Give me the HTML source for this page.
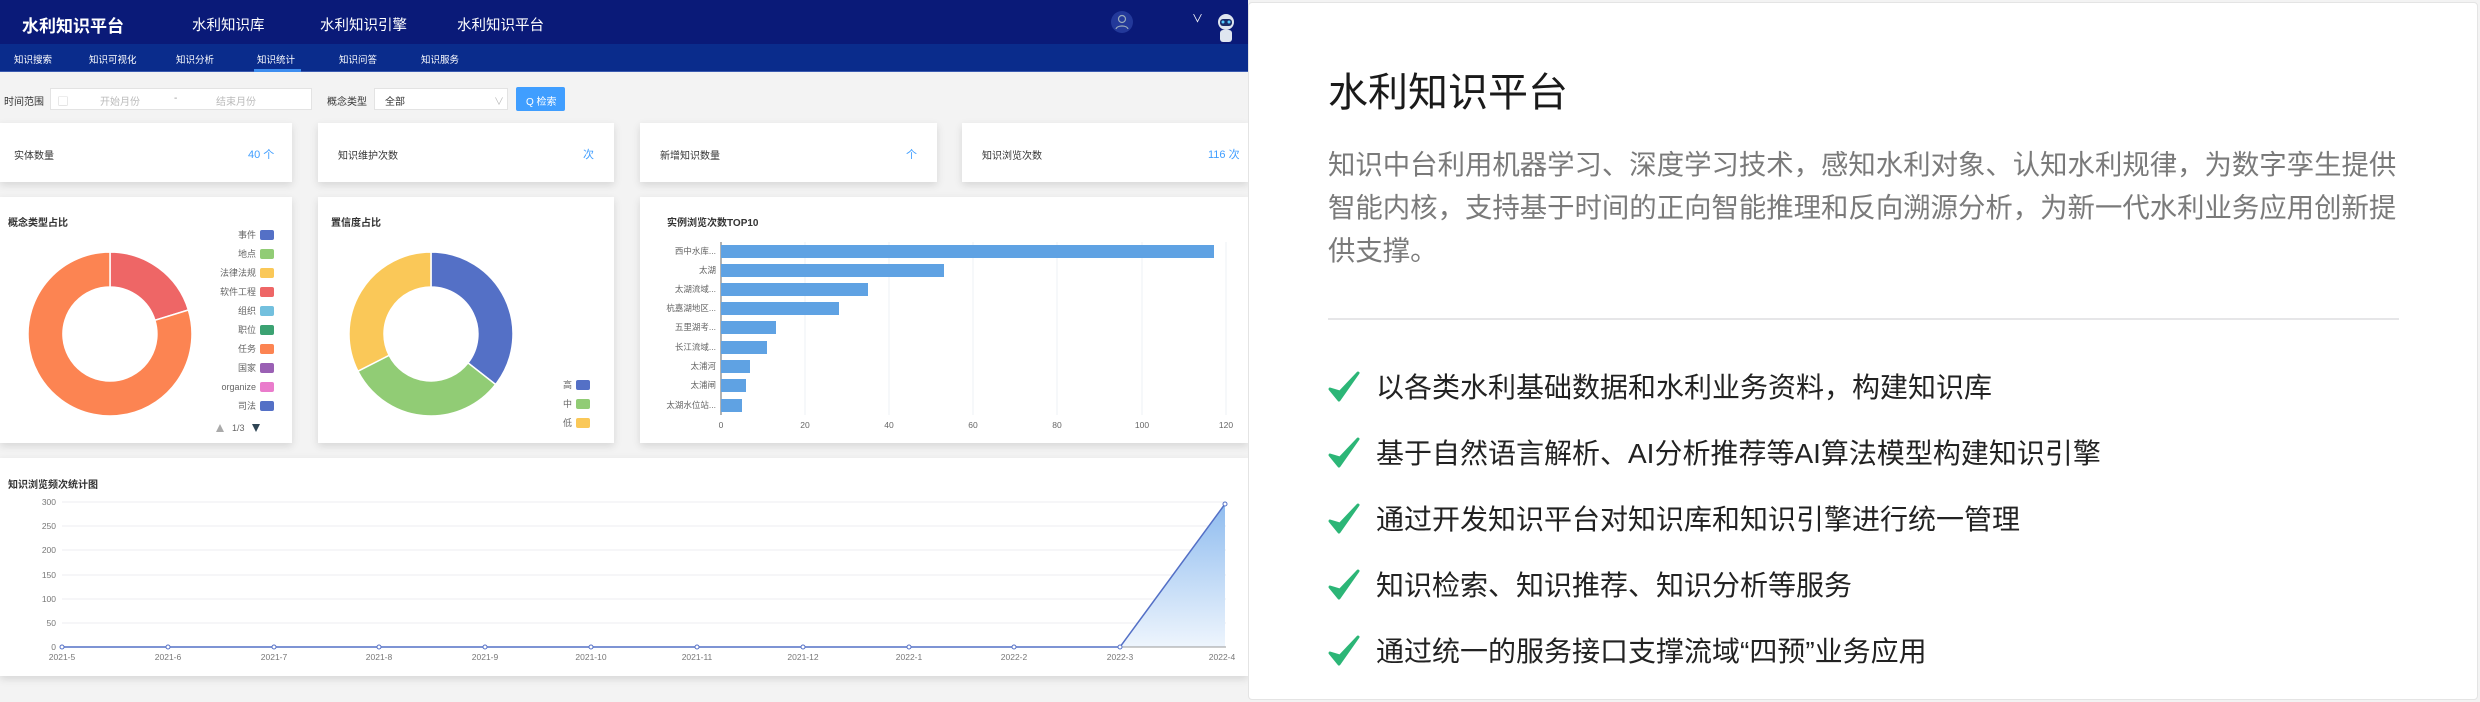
<!DOCTYPE html>
<html><head><meta charset="utf-8"><style>
*{margin:0;padding:0;box-sizing:border-box}
body{width:2480px;height:702px;overflow:hidden;background:#f3f3f3;font-family:"Liberation Sans","Noto Sans CJK SC",sans-serif;position:relative}
.a{position:absolute}
.nav{left:0;top:0;width:1248px;height:44px;background:#0a1a78}
.sub{left:0;top:44px;width:1248px;height:28px;background:#0a2c8c;border-bottom:1px solid #3a5ab0}
.w{color:#fff;white-space:nowrap}
.card{background:#fff;box-shadow:0 3px 8px rgba(0,0,0,.12)}
.s{font-size:10px;color:#333;white-space:nowrap}
.right{left:1248px;top:2px;width:1230px;height:698px;background:#fff;border:1px solid #e4e4e4;border-radius:4px}
.chk{position:absolute;left:1328px;width:520px}
.chk span{position:absolute;left:48px;top:0;font-size:28px;color:#222;white-space:nowrap;line-height:34px}
</style></head><body>
<div class="a nav"></div>
<div class="a w" style="left:22px;top:12px;font-size:17px;font-weight:bold">水利知识平台</div>
<div class="a w" style="left:192px;top:14px;font-size:14.5px">水利知识库</div>
<div class="a w" style="left:320px;top:14px;font-size:14.5px">水利知识引擎</div>
<div class="a w" style="left:457px;top:14px;font-size:14.5px">水利知识平台</div>
<svg class="a" style="left:1110px;top:10px" width="24" height="24"><circle cx="12" cy="12" r="11" fill="#23399a"/><circle cx="12" cy="9" r="3.5" fill="none" stroke="#9ab" stroke-width="1.2"/><path d="M6 19c1-4 11-4 12 0" fill="none" stroke="#9ab" stroke-width="1.2"/></svg>
<div class="a w" style="left:1192px;top:10px;font-size:11px">∨</div>
<svg class="a" style="left:1212px;top:12px" width="28" height="32"><circle cx="14" cy="10" r="8" fill="#dfe6f0"/><rect x="8" y="7" width="12" height="7" rx="3" fill="#1a2d6a"/><circle cx="11" cy="10" r="1.5" fill="#5cf"/><circle cx="17" cy="10" r="1.5" fill="#5cf"/><rect x="8" y="18" width="12" height="12" rx="3" fill="#dfe6f0"/></svg>
<div class="a sub"></div>
<div class="a w" style="left:14px;top:52px;font-size:9.5px">知识搜索</div>
<div class="a w" style="left:89px;top:52px;font-size:9.5px">知识可视化</div>
<div class="a w" style="left:176px;top:52px;font-size:9.5px">知识分析</div>
<div class="a w" style="left:257px;top:52px;font-size:9.5px">知识统计</div>
<div class="a" style="left:254px;top:69px;width:47px;height:3px;background:#3d8ef0"></div>
<div class="a w" style="left:339px;top:52px;font-size:9.5px">知识问答</div>
<div class="a w" style="left:421px;top:52px;font-size:9.5px">知识服务</div>

<div class="a s" style="left:4px;top:93px">时间范围</div>
<div class="a" style="left:50px;top:88px;width:262px;height:22px;background:#fff;border:1px solid #e3e3e3"></div>
<div class="a s" style="left:58px;top:93px;color:#bbb">▢</div>
<div class="a s" style="left:100px;top:93px;color:#bbb">开始月份</div>
<div class="a s" style="left:174px;top:93px;color:#999">-</div>
<div class="a s" style="left:216px;top:93px;color:#bbb">结束月份</div>
<div class="a s" style="left:327px;top:93px">概念类型</div>
<div class="a" style="left:374px;top:88px;width:134px;height:22px;background:#fff;border:1px solid #e3e3e3"></div>
<div class="a s" style="left:385px;top:93px">全部</div>
<div class="a s" style="left:494px;top:93px;color:#bbb">∨</div>
<div class="a" style="left:516px;top:87px;width:49px;height:24px;background:#409eff;border-radius:2px"></div>
<div class="a s" style="left:526px;top:93px;color:#fff">Q 检索</div>

<div class="a card" style="left:0;top:123px;width:292px;height:59px"></div>
<div class="a card" style="left:318px;top:123px;width:296px;height:59px"></div>
<div class="a card" style="left:640px;top:123px;width:297px;height:59px"></div>
<div class="a card" style="left:962px;top:123px;width:286px;height:59px"></div>
<div class="a s" style="left:14px;top:147px">实体数量</div>
<div class="a s" style="left:248px;top:146px;color:#409eff;font-size:11px">40 个</div>
<div class="a s" style="left:338px;top:147px">知识维护次数</div>
<div class="a s" style="left:583px;top:146px;color:#409eff;font-size:11px">次</div>
<div class="a s" style="left:660px;top:147px">新增知识数量</div>
<div class="a s" style="left:906px;top:146px;color:#409eff;font-size:11px">个</div>
<div class="a s" style="left:982px;top:147px">知识浏览次数</div>
<div class="a s" style="left:1208px;top:146px;color:#409eff;font-size:11px">116 次</div>

<div class="a card" style="left:0;top:197px;width:292px;height:246px"></div>
<div class="a card" style="left:318px;top:197px;width:296px;height:246px"></div>
<div class="a card" style="left:640px;top:197px;width:608px;height:246px"></div>
<div class="a s" style="left:8px;top:214px;font-weight:bold">概念类型占比</div>
<div class="a s" style="left:331px;top:214px;font-weight:bold">置信度占比</div>
<div class="a s" style="left:667px;top:214px;font-weight:bold">实例浏览次数TOP10</div>

<svg class="a" style="left:0;top:197px" width="1248" height="246" font-family="Liberation Sans,Noto Sans CJK SC,sans-serif" font-size="9" fill="#666">
<g transform="translate(110,137)" stroke="#fff" stroke-width="1.5">
<path d="M0,-82 A82,82 0 0 1 78.4,-24 L44.9,-13.7 A47,47 0 0 0 0,-47Z" fill="#ee6666"/>
<path d="M78.4,-24 A82,82 0 1 1 0,-82 L0,-47 A47,47 0 1 0 44.9,-13.7Z" fill="#fc8452"/>
</g>
<g text-anchor="end">
<text x="256" y="41">事件</text><rect x="260" y="33" width="14" height="10" rx="2" fill="#5470c6"/>
<text x="256" y="60">地点</text><rect x="260" y="52" width="14" height="10" rx="2" fill="#91cc75"/>
<text x="256" y="79">法律法规</text><rect x="260" y="71" width="14" height="10" rx="2" fill="#fac858"/>
<text x="256" y="98">软件工程</text><rect x="260" y="90" width="14" height="10" rx="2" fill="#ee6666"/>
<text x="256" y="117">组织</text><rect x="260" y="109" width="14" height="10" rx="2" fill="#73c0de"/>
<text x="256" y="136">职位</text><rect x="260" y="128" width="14" height="10" rx="2" fill="#3ba272"/>
<text x="256" y="155">任务</text><rect x="260" y="147" width="14" height="10" rx="2" fill="#fc8452"/>
<text x="256" y="174">国家</text><rect x="260" y="166" width="14" height="10" rx="2" fill="#9a60b4"/>
<text x="256" y="193">organize</text><rect x="260" y="185" width="14" height="10" rx="2" fill="#ea7ccc"/>
<text x="256" y="212">司法</text><rect x="260" y="204" width="14" height="10" rx="2" fill="#5470c6"/>
</g>
<path d="M216,235 L220,227 L224,235Z" fill="#aaa"/><text x="232" y="234">1/3</text><path d="M252,227 L260,227 L256,235Z" fill="#2f4554"/>
<g transform="translate(431,137)" stroke="#fff" stroke-width="1.5">
<path d="M0,-82 A82,82 0 0 1 64.6,50.5 L37,28.9 A47,47 0 0 0 0,-47Z" fill="#5470c6"/>
<path d="M64.6,50.5 A82,82 0 0 1 -73.1,37.2 L-41.9,21.3 A47,47 0 0 0 37,28.9Z" fill="#91cc75"/>
<path d="M-73.1,37.2 A82,82 0 0 1 0,-82 L0,-47 A47,47 0 0 0 -41.9,21.3Z" fill="#fac858"/>
</g>
<g text-anchor="end">
<text x="572" y="191">高</text><rect x="576" y="183" width="14" height="10" rx="2" fill="#5470c6"/>
<text x="572" y="210">中</text><rect x="576" y="202" width="14" height="10" rx="2" fill="#91cc75"/>
<text x="572" y="229">低</text><rect x="576" y="221" width="14" height="10" rx="2" fill="#fac858"/>
</g>
<g stroke="#eef0f4"><line x1="805" y1="45" x2="805" y2="218"/><line x1="889" y1="45" x2="889" y2="218"/><line x1="973" y1="45" x2="973" y2="218"/><line x1="1057" y1="45" x2="1057" y2="218"/><line x1="1142" y1="45" x2="1142" y2="218"/><line x1="1226" y1="45" x2="1226" y2="218"/></g>
<line x1="721" y1="45" x2="721" y2="218" stroke="#666"/>
<g fill="#5fa2e3">
<rect x="721" y="48" width="493" height="13"/><rect x="721" y="67" width="223" height="13"/><rect x="721" y="86" width="147" height="13"/><rect x="721" y="105" width="118" height="13"/><rect x="721" y="124" width="55" height="13"/><rect x="721" y="144" width="46" height="13"/><rect x="721" y="163" width="29" height="13"/><rect x="721" y="182" width="25" height="13"/><rect x="721" y="202" width="21" height="13"/>
</g>
<g text-anchor="end" font-size="8.5">
<text x="716" y="57">西中水库...</text><text x="716" y="76">太湖</text><text x="716" y="95">太湖流域...</text><text x="716" y="114">杭嘉湖地区...</text><text x="716" y="133">五里湖考...</text><text x="716" y="153">长江流域...</text><text x="716" y="172">太浦河</text><text x="716" y="191">太浦闸</text><text x="716" y="211">太湖水位站...</text>
</g>
<g text-anchor="middle" font-size="8.5"><text x="721" y="231">0</text><text x="805" y="231">20</text><text x="889" y="231">40</text><text x="973" y="231">60</text><text x="1057" y="231">80</text><text x="1142" y="231">100</text><text x="1226" y="231">120</text></g>
</svg>

<div class="a card" style="left:0;top:458px;width:1248px;height:218px"></div>
<div class="a s" style="left:8px;top:476px;font-weight:bold">知识浏览频次统计图</div>
<svg class="a" style="left:0;top:458px" width="1248" height="218" font-family="Liberation Sans,sans-serif" font-size="8.5" fill="#777">
<defs><linearGradient id="g" x1="0" y1="0" x2="0" y2="1"><stop offset="0" stop-color="#8fbcef"/><stop offset="1" stop-color="#eef5fd"/></linearGradient></defs>
<g stroke="#eceef2"><line x1="62" y1="44" x2="1226" y2="44"/><line x1="62" y1="68" x2="1226" y2="68"/><line x1="62" y1="92" x2="1226" y2="92"/><line x1="62" y1="117" x2="1226" y2="117"/><line x1="62" y1="141" x2="1226" y2="141"/><line x1="62" y1="165" x2="1226" y2="165"/></g>
<g text-anchor="end"><text x="56" y="47">300</text><text x="56" y="71">250</text><text x="56" y="95">200</text><text x="56" y="120">150</text><text x="56" y="144">100</text><text x="56" y="168">50</text><text x="56" y="192">0</text></g>
<path d="M1120,189 L1225,46 L1225,189Z" fill="url(#g)"/>
<line x1="62" y1="189" x2="1226" y2="189" stroke="#999"/>
<polyline points="62,189 1120,189 1225,46" fill="none" stroke="#5470c6" stroke-width="1.5"/>
<g fill="#fff" stroke="#5470c6"><circle cx="62" cy="189" r="2"/><circle cx="168" cy="189" r="2"/><circle cx="274" cy="189" r="2"/><circle cx="379" cy="189" r="2"/><circle cx="485" cy="189" r="2"/><circle cx="591" cy="189" r="2"/><circle cx="697" cy="189" r="2"/><circle cx="803" cy="189" r="2"/><circle cx="909" cy="189" r="2"/><circle cx="1014" cy="189" r="2"/><circle cx="1120" cy="189" r="2"/><circle cx="1225" cy="46" r="2"/></g>
<g text-anchor="middle"><text x="62" y="202">2021-5</text><text x="168" y="202">2021-6</text><text x="274" y="202">2021-7</text><text x="379" y="202">2021-8</text><text x="485" y="202">2021-9</text><text x="591" y="202">2021-10</text><text x="697" y="202">2021-11</text><text x="803" y="202">2021-12</text><text x="909" y="202">2022-1</text><text x="1014" y="202">2022-2</text><text x="1120" y="202">2022-3</text><text x="1222" y="202">2022-4</text></g>
</svg>

<div class="a right"></div>
<div class="a" style="left:1328px;top:60px;font-size:40px;color:#1a1a1a;white-space:nowrap">水利知识平台</div>
<div class="a" style="left:1328px;top:143px;width:1076px;font-size:27.4px;line-height:43px;color:#7a7a7a">知识中台利用机器学习、深度学习技术，感知水利对象、认知水利规律，为数字孪生提供智能内核，支持基于时间的正向智能推理和反向溯源分析，为新一代水利业务应用创新提供支撑。</div>
<div class="a" style="left:1328px;top:318px;width:1071px;height:2px;background:#e6e6e8"></div>
<svg width="0" height="0" style="position:absolute"><defs><path id="ck" d="M2,18 L11,29 L30,2 L12,21Z" fill="#2cb677" stroke="#2cb677" stroke-width="3" stroke-linejoin="round"/></defs></svg>
<div class="chk" style="top:371px"><svg width="34" height="34"><use href="#ck"/></svg><span>以各类水利基础数据和水利业务资料，构建知识库</span></div>
<div class="chk" style="top:437px"><svg width="34" height="34"><use href="#ck"/></svg><span>基于自然语言解析、AI分析推荐等AI算法模型构建知识引擎</span></div>
<div class="chk" style="top:503px"><svg width="34" height="34"><use href="#ck"/></svg><span>通过开发知识平台对知识库和知识引擎进行统一管理</span></div>
<div class="chk" style="top:569px"><svg width="34" height="34"><use href="#ck"/></svg><span>知识检索、知识推荐、知识分析等服务</span></div>
<div class="chk" style="top:635px"><svg width="34" height="34"><use href="#ck"/></svg><span>通过统一的服务接口支撑流域“四预”业务应用</span></div>
</body></html>
